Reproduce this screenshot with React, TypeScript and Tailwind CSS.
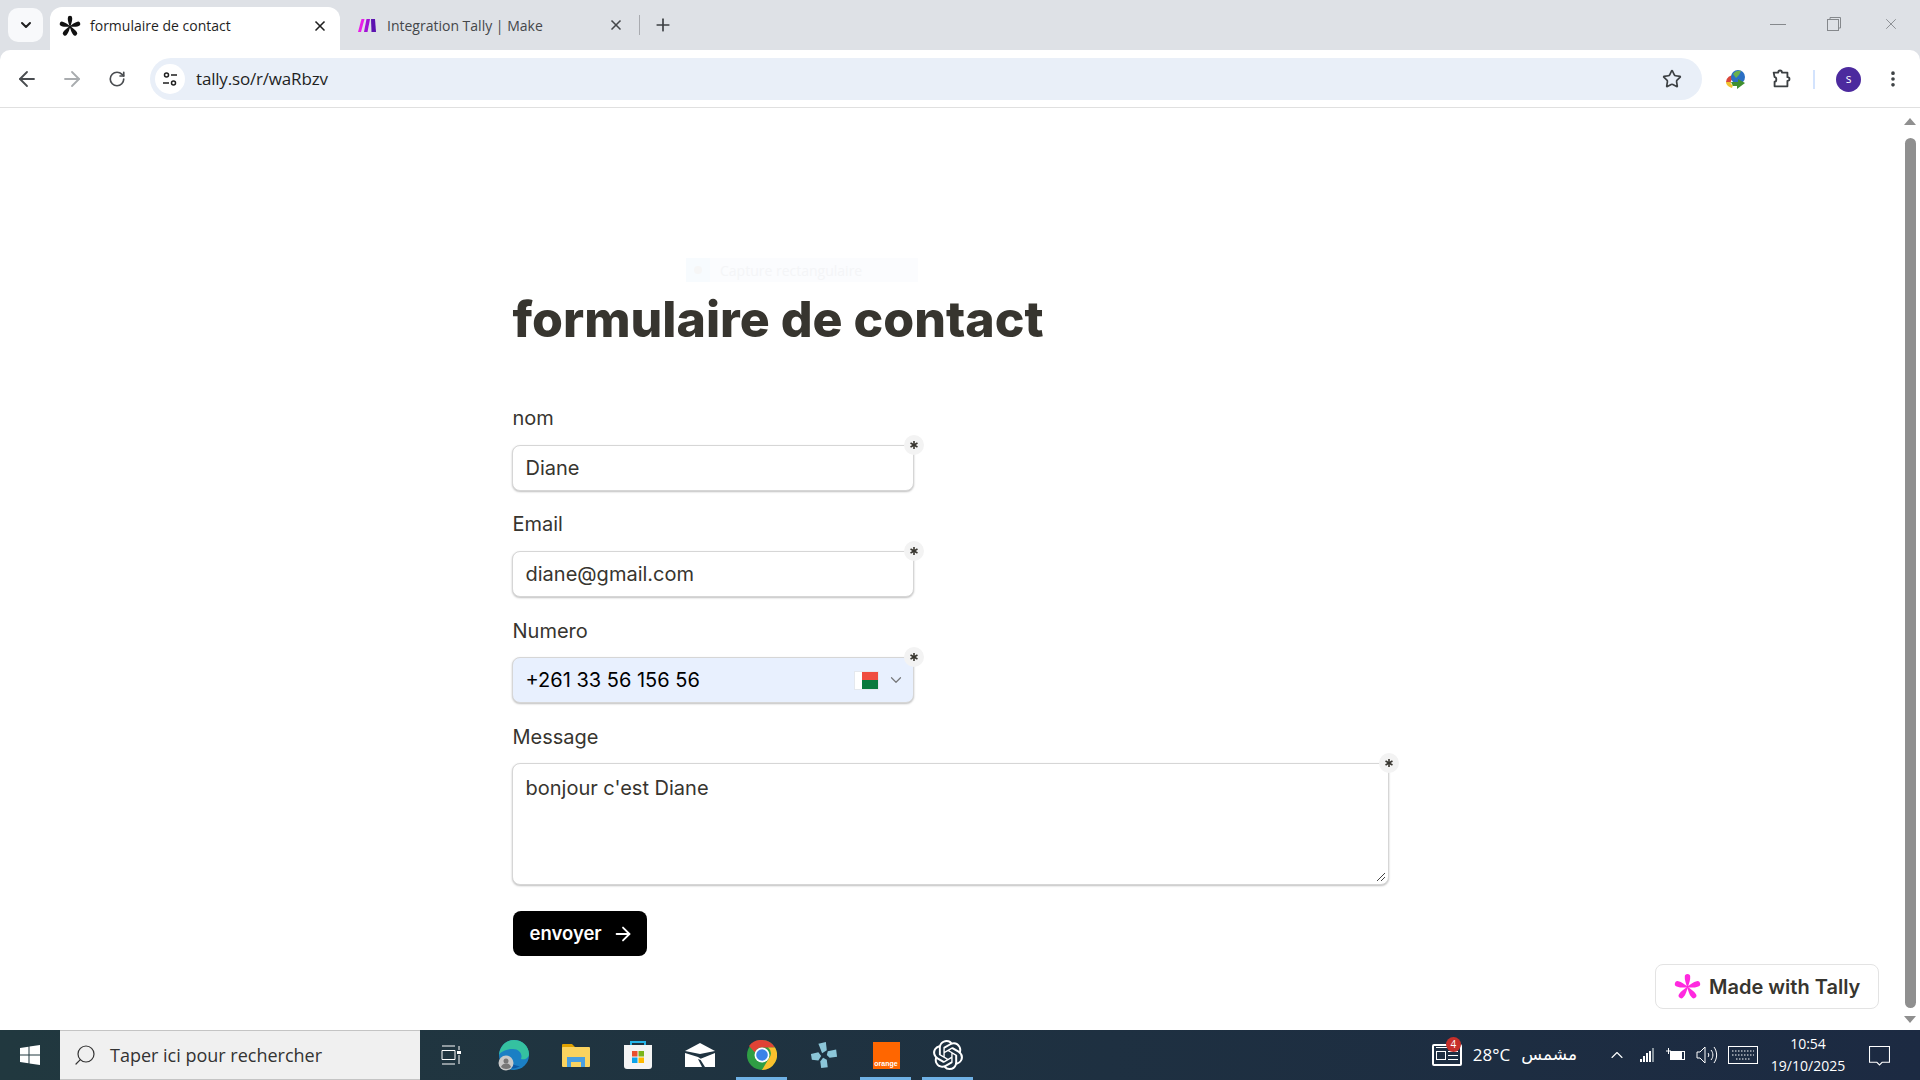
import { ArrowLeft, ArrowRight, ChevronDown, ChevronUp, MoreVertical, Plus, RotateCw, Search, Star, X } from 'lucide-react';
import { SiOpenai } from 'react-icons/si';

const uiFont = 'font-["Open_Sans","Noto_Sans","DejaVu_Sans",sans-serif]';

const TallyMark = ({ className, fill }: { className: string; fill: string }) => (
  <svg viewBox="0 0 24 24" className={className} fill={fill}>
    {[0, 72, 144, 216, 288].map((angle) => (
      <path
        key={angle}
        d="M12 13.500C10.600 9.500 9.300 6 9.600 3.200a2.400 2.400 0 0 1 4.800 0C14.700 6 13.400 9.500 12 13.500z"
        transform={`rotate(${angle} 12 12.500)`}
      />
    ))}
  </svg>
);

const MakeLogo = () => (
  <svg viewBox="0 0 18 13" className="w-[18px] h-[13px]">
    <path d="M3.500 0h3L3 13H0z" fill="#e91ee8" />
    <path d="M8.500 0h3.500L9.500 13H6z" fill="#a213d6" />
    <path d="M13 0h4l1 13h-4.500z" fill="#5c12b0" />
  </svg>
);

const RequiredMark = () => (
  <div className="absolute right-[-11px] top-[-11px] w-5 h-5 rounded-full bg-[#f3f3f3] flex items-center justify-center">
    <svg viewBox="0 0 10 10" className="w-2 h-2 fill-[#37352f]">
      {[0, 60, 120].map((angle) => (
        <rect key={angle} x="4" y="0" width="2" height="10" transform={`rotate(${angle} 5 5)`} />
      ))}
    </svg>
  </div>
);

const TabStrip = () => (
  <div className={`h-[50px] shrink-0 bg-[#dee1e6] flex items-start pl-2 ${uiFont}`}>
    <div className="w-[35px] h-[34px] mt-2 rounded-[10px] bg-[#f8f9fb] flex items-center justify-center">
      <ChevronDown className="w-4 h-4 text-[#1f1f1f]" strokeWidth={3} />
    </div>
    <div className="ml-[7px] mt-[7px] w-[290px] h-[43px] rounded-t-[12px] bg-white flex items-center pl-[9px] pb-[6px]">
      <TallyMark className="w-[22px] h-[22px] shrink-0" fill="#111111" />
      <span className="ml-[9px] text-[14px] text-[#1f1f1f]">formulaire de contact</span>
      <X className="ml-auto mr-[12px] w-4 h-4 text-[#1f1f1f]" strokeWidth={2.5} />
    </div>
    <div className="ml-[18px] h-[50px] w-[315px] flex items-center">
      <MakeLogo />
      <span className="ml-[11px] text-[14px] text-[#45474a]">Integration Tally | Make</span>
      <X className="ml-auto w-4 h-4 text-[#45474a]" strokeWidth={2.5} />
      <div className="ml-[15px] w-px h-5 bg-[#a9abb0]" />
      <Plus className="ml-[13px] w-[20px] h-[20px] text-[#3c3f43]" strokeWidth={2} />
    </div>
    <div className="ml-auto h-[48px] flex items-center text-[#85888c]">
      <div className="w-[16px] h-px bg-current mr-[41px]" />
      <svg viewBox="0 0 14 14" className="w-[14px] h-[14px] mr-[41px] fill-none stroke-current">
        <rect x="0.5" y="2.5" width="11" height="11" />
        <path d="M3 2.5V.5h10.500V11h-2" />
      </svg>
      <X className="w-[18px] h-[18px] mr-[20px]" strokeWidth={1.2} />
    </div>
  </div>
);

const IdmIcon = () => (
  <svg viewBox="0 0 22 20" className="w-[22px] h-[20px]">
    <path d="M1 13a8 7 0 0 1 9-7l-1 4a4 3 0 0 0-3 4z" fill="#d9463a" />
    <path d="M1 13c0 3 3 5 6 6l1-3c-2-.5-3-1.500-2-3z" fill="#f0c330" />
    <circle cx="13" cy="8" r="7" fill="#2a6fc4" />
    <path d="M8 5c2-3 5-4 8-3l-2 4-3 3z" fill="#6ab04c" />
    <path d="M6 13h7v-3l7 4-8 6v-3H8z" fill="#3f8f2f" />
  </svg>
);

const PuzzleIcon = () => (
  <svg viewBox="0 0 24 24" className="w-[22px] h-[22px] fill-none stroke-[#3c4043] stroke-[2]" strokeLinejoin="round">
    <path d="M4 5h5c0-3 4-3 4 0h6v5c3 0 3 4 0 4v6H5v-5c2.500 0 2.500-5 0-5z" />
  </svg>
);

const SiteIcon = () => (
  <svg viewBox="0 0 16 16" className="w-4 h-4 fill-none stroke-[#1f1f1f] stroke-[1.500]">
    <circle cx="4.500" cy="4" r="2" />
    <path d="M9 4h6M1 12h6" />
    <circle cx="11.500" cy="12" r="2" />
  </svg>
);

const Toolbar = () => (
  <div className={`h-[58px] shrink-0 bg-[#dee1e6] ${uiFont}`}>
    <div className="h-[57px] pt-px bg-white rounded-t-[10px] flex items-center">
      <ArrowLeft className="ml-[15px] w-6 h-6 text-[#494c50]" strokeWidth={1.8} />
      <ArrowRight className="ml-[21px] w-6 h-6 text-[#a9acaf]" strokeWidth={1.8} />
      <RotateCw className="ml-[24px] w-[18px] h-[18px] text-[#494c50]" strokeWidth={2.2} />
      <div className="ml-[24px] h-[42px] w-[1552px] rounded-full bg-[#e9eff8] flex items-center pl-[5px]">
        <div className="w-[30px] h-[30px] rounded-full bg-white flex items-center justify-center">
          <SiteIcon />
        </div>
        <span className="ml-[11px] text-[17px] text-[#1f1f1f] tracking-[-0.18px]">tally.so/r/waRbzv</span>
        <Star className="ml-auto mr-[20px] w-5 h-5 text-[#3c4043]" strokeWidth={2} />
      </div>
      <div className="ml-[23px]"><IdmIcon /></div>
      <div className="ml-[23px]"><PuzzleIcon /></div>
      <div className="ml-[21px] w-[2px] h-[19px] bg-[#d3e3fd]" />
      <div className="ml-[21px] w-[25px] h-[25px] rounded-full bg-[#4c2a9e] text-white text-[12px] flex items-center justify-center">s</div>
      <MoreVertical className="ml-[22px] w-5 h-5 text-[#3c4043]" strokeWidth={2.4} />
    </div>
    <div className="h-px bg-[#e0e0e0]" />
  </div>
);

const Field = ({ label, value }: { label: string; value: string }) => (
  <div className="w-[402px]">
    <div className="pl-px text-[20px] leading-[25px] text-[#37352f]">{label}</div>
    <div className="relative mt-[14px] h-[46px] rounded-[8px] border border-[#d6d6d6] shadow-[0_1px_2px_rgba(0,0,0,0.25)] bg-white flex items-center px-[13px] text-[20px] text-[#37352f]">
      {value}
      <RequiredMark />
    </div>
  </div>
);

const PhoneField = () => (
  <div className="w-[402px]">
    <div className="pl-px pt-px text-[20px] leading-[25px] text-[#37352f] box-content">Numero</div>
    <div className="relative mt-[13px] h-[46px] rounded-[8px] border border-[#d6d6d6] shadow-[0_1px_2px_rgba(0,0,0,0.25)] bg-[#e8f0fe] flex items-center pl-[13px] pr-[12px] text-[20px] text-black">
      +261 33 56 156 56
      <div className="ml-auto w-[25px] h-[19px] flex bg-white border border-[#e4e8ee]">
        <div className="w-1/3 bg-white" />
        <div className="flex-1 flex flex-col">
          <div className="flex-1 bg-[#f04d3f]" />
          <div className="flex-1 bg-[#0a7a3c]" />
        </div>
      </div>
      <ChevronDown className="ml-[8px] mr-[-4px] w-[18px] h-[18px] text-[#77787a]" strokeWidth={1.6} />
      <RequiredMark />
    </div>
  </div>
);

const MessageField = () => (
  <div className="w-[877px] mt-[21px]">
    <div className="pl-px pt-px text-[20px] leading-[25px] text-[#37352f] box-content">Message</div>
    <div className="relative mt-[13px] h-[122px] rounded-[8px] border border-[#d6d6d6] shadow-[0_1px_2px_rgba(0,0,0,0.25)] bg-white px-[13px] pt-[9px] text-[20px] leading-[30px] text-[#37352f]">
      bonjour c'est Diane
      <RequiredMark />
      <svg viewBox="0 0 10 10" className="absolute right-[2px] bottom-[2px] w-[10px] h-[10px] stroke-[#444] fill-none">
        <path d="M1 9l8-8M5 9l4-4" />
      </svg>
    </div>
  </div>
);

const ContactForm = () => (
  <main className="flex-1 relative overflow-hidden font-['Inter',sans-serif]">
    {/* leftover of the screen capture tool, almost invisible */}
    <div className={`absolute left-[686px] top-[150px] w-[232px] h-[24px] bg-[#fbfcfe] flex items-center text-[14px] text-[#f4f5f7] ${uiFont}`}>
      <div className="w-6 h-6 bg-[#f7fbfe] flex items-center justify-center">
        <div className="w-2 h-2 rounded-full bg-[#f6f6f6]" />
      </div>
      <span className="ml-[10px]">Capture rectangulaire</span>
    </div>

    <div className="mx-auto w-[877px] pt-[180px]">
      <h1 className="text-[50px] leading-[62px] font-extrabold text-[#37352f] pl-px">formulaire de contact</h1>
      <div className="mt-[56px] flex flex-col gap-[21px]">
        <Field label="nom" value="Diane" />
        <Field label="Email" value="diane@gmail.com" />
        <PhoneField />
      </div>
      <MessageField />
      <button className="mt-[26px] ml-px w-[134px] h-[45px] rounded-[8px] bg-black text-white text-[18.5px] font-semibold flex items-center pl-[17px] gap-[10px]">
        envoyer
        <ArrowRight className="w-[22px] h-[22px]" strokeWidth={2} />
      </button>
    </div>

    <div className="absolute right-[21px] bottom-[21px] w-[224px] h-[45px] rounded-[8px] border border-[#e3e3e3] bg-white flex items-center pl-[18px] gap-[8px] text-[20px] font-semibold text-[#37352f]">
      <TallyMark className="w-[27px] h-[27px]" fill="#ff29df" />
      Made with Tally
    </div>
  </main>
);

const Scrollbar = () => (
  <div className="w-5 shrink-0 bg-white flex flex-col items-center">
    <div className="mt-[10px] w-0 h-0 border-x-[6px] border-x-transparent border-b-[7px] border-b-[#8f8f8f]" />
    <div className="mt-[13px] w-[11px] h-[870px] rounded-full bg-[#8f8f8f]" />
    <div className="mt-[8px] w-0 h-0 border-x-[6px] border-x-transparent border-t-[7px] border-t-[#8f8f8f]" />
  </div>
);

const EdgeIcon = () => (
  <svg viewBox="0 0 32 32" className="w-[32px] h-[32px]">
    <circle cx="16" cy="16" r="15" fill="#1b7fc4" />
    <path d="M1 16C2 6 9 1 16 1c8 0 15 6 15 14 0 4-4 6-8 5 2-5-2-10-8-10C9 10 3 12 1 16z" fill="#35c1a0" />
    <path d="M12 20c0 5 5 7 10 7-4 3-9 3-12 1-2-3-1-7 2-8z" fill="#0c5aa6" />
    <circle cx="8" cy="24" r="7.500" fill="#c9c9c9" />
    <circle cx="8" cy="22" r="2.500" fill="#777" />
    <path d="M3 28c1-3 3-3.500 5-3.500s4 .5 5 3.500a7 7 0 0 1-10 0z" fill="#777" />
  </svg>
);

const ExplorerIcon = () => (
  <svg viewBox="0 0 28 24" className="w-[28px] h-[24px]">
    <path d="M0 2a1 1 0 0 1 1-1h9l3 3v6H0z" fill="#e0a100" />
    <rect y="4" width="28" height="20" rx="1" fill="#fbd35f" />
    <path d="M5 24V14h18v10h-4v-5h-10v5z" fill="#4a9fe0" />
  </svg>
);

const StoreIcon = () => (
  <svg viewBox="0 0 30 30" className="w-[30px] h-[30px]">
    <path d="M8 5V2h14v3" fill="none" stroke="#26b4e8" strokeWidth="2" />
    <path d="M1 5h28v21a3 3 0 0 1-3 3H4a3 3 0 0 1-3-3z" fill="#f4f4f4" />
    <rect x="9" y="11" width="5.500" height="5.500" fill="#e8502e" />
    <rect x="15.500" y="11" width="5.500" height="5.500" fill="#7ab51d" />
    <rect x="9" y="17.500" width="5.500" height="5.500" fill="#0ba4ea" />
    <rect x="15.500" y="17.500" width="5.500" height="5.500" fill="#fdb900" />
  </svg>
);

const MailIcon = () => (
  <svg viewBox="0 0 30 24" className="w-[30px] h-[24px]">
    <path d="M0 8L15 0l15 8-15 3z" fill="#fff" />
    <path d="M0 10l13 4 8 5-8-3 4 8H0zM30 10v14H20l-5-8z" fill="#fff" />
  </svg>
);

const ChromeIcon = () => (
  <svg viewBox="0 0 30 30" className="w-[30px] h-[30px]">
    <circle cx="15" cy="15" r="15" fill="#2f9e44" />
    <path d="M15 0a15 15 0 0 1 13 7.500H15a7.500 7.500 0 0 0-7 5L2 6A15 15 0 0 1 15 0z" fill="#e04335" />
    <path d="M28 7.500A15 15 0 0 1 15 30l6.500-11a7.500 7.500 0 0 0-.5-11.500z" fill="#fbc02d" />
    <circle cx="15" cy="15" r="7.500" fill="#fff" />
    <circle cx="15" cy="15" r="5.800" fill="#3b82e8" />
  </svg>
);

const PpssppIcon = () => (
  <svg viewBox="0 0 30 30" className="w-[28px] h-[28px] fill-[#8cc6d8]">
    <path d="M9 3l8-2 1 9-5 3z" />
    <path d="M19 11l9-2 1 8-8 1-3-3z" />
    <path d="M1 14l8-2 3 4-3 5-7-1z" />
    <path d="M14 18l4 2 1 8-7 1-1-7z" />
  </svg>
);

const OrangeIcon = () => (
  <div className="w-[27px] h-[27px] bg-[#ff6600] flex items-end justify-center text-[7px] font-bold leading-[11px] text-white font-['Liberation_Sans',sans-serif]">orange</div>
);

const TrayIcons = () => (
  <div className="flex items-center text-white">
    <ChevronUp className="ml-[30px] w-[20px] h-[20px]" strokeWidth={1.3} />
    <svg viewBox="0 0 14 14" className="ml-[13px] w-[14px] h-[14px] fill-white">
      <rect x="0" y="11" width="2" height="3" />
      <rect x="3" y="8" width="2" height="6" />
      <rect x="6" y="5" width="2" height="9" />
      <rect x="9" y="3" width="2" height="11" />
      <rect x="12" y="0" width="2" height="14" fill="#8a96a0" />
    </svg>
    <svg viewBox="0 0 20 14" className="ml-[12px] w-[20px] h-[14px] fill-none stroke-white">
      <rect x="4.500" y="3.500" width="14" height="8" />
      <rect x="5" y="4" width="11" height="7" fill="#fff" stroke="none" />
      <path d="M0 3h5M2.500 0v6" />
    </svg>
    <svg viewBox="0 0 22 18" className="ml-[10px] w-[22px] h-[18px] fill-none stroke-white">
      <path d="M1 6h3l5-5v16l-5-5H1zM12 7c1 1 1 3 0 4M15 4c2.500 3 2.500 7 0 10M18 1c3.500 5 3.500 11 0 16" />
    </svg>
    <svg viewBox="0 0 30 18" className="ml-[10px] w-[30px] h-[18px] fill-none stroke-white">
      <rect x="0.500" y="0.500" width="29" height="17" />
      <path d="M4 5h22M4 9h22M8 13h14" strokeDasharray="1.500 1.500" />
    </svg>
  </div>
);

const TaskItem = ({ children, active = false }: { children: React.ReactNode; active?: boolean }) => (
  <div className="relative w-[62px] flex items-center justify-center">
    {children}
    {active && <div className="absolute left-[5px] right-[6px] bottom-0 h-[3px] bg-[#6fb1e5]" />}
  </div>
);

const NewsIcon = () => (
  <div className="relative w-[30px] h-[22px] border-2 border-white rounded-[2px]">
    <div className="absolute left-[2px] right-[2px] top-[1px] h-px bg-white" />
    <div className="absolute left-[2px] top-[5px] w-[10px] h-[9px] border border-white" />
    <div className="absolute right-[2px] top-[5px] w-[10px] h-[9px] border-y border-white" />
    <div className="absolute right-[2px] top-[9px] w-[10px] h-px bg-white" />
    <div className="absolute -right-[1px] -top-[9px] w-[15px] h-[15px] rounded-full bg-[#c62f2a] text-[10px] leading-[15px] text-center">4</div>
  </div>
);

const Taskbar = () => (
  <footer className={`h-[50px] shrink-0 flex items-stretch bg-gradient-to-r from-[#21383f] to-[#1c2a42] text-white ${uiFont}`}>
    <div className="w-[60px] flex items-center justify-center">
      <svg viewBox="0 0 20 20" className="w-[20px] h-[20px] fill-white">
        <path d="M0 3l8.500-1.200v7.700H0zM9.500 1.600L20 0v9.500H9.500zM0 10.500h8.500v7.700L0 17zM9.500 10.500H20V20L9.500 18.400z" />
      </svg>
    </div>
    <div className="w-[360px] bg-[#f0f0f0] border-y border-[#c4c4c4] flex items-center pl-[13px] text-[#333] text-[18px]">
      <Search className="w-6 h-6 -scale-x-100" strokeWidth={1.2} />
      <span className="ml-[13px]">Taper ici pour rechercher</span>
    </div>
    <div className="w-[63px] pr-[2px] flex items-center justify-center">
      <svg viewBox="0 0 20 20" className="w-5 h-5 fill-none stroke-white">
        <path d="M1 1h13M1 19h13M1 5.500h13v9H1zM18 1v4M18 10v9" />
        <rect x="16.500" y="6.500" width="3" height="2" fill="#fff" />
      </svg>
    </div>
    <TaskItem><EdgeIcon /></TaskItem>
    <TaskItem><ExplorerIcon /></TaskItem>
    <TaskItem><StoreIcon /></TaskItem>
    <TaskItem><MailIcon /></TaskItem>
    <TaskItem active><ChromeIcon /></TaskItem>
    <TaskItem><PpssppIcon /></TaskItem>
    <TaskItem active><OrangeIcon /></TaskItem>
    <TaskItem active><SiOpenai className="w-[30px] h-[30px]" /></TaskItem>

    <div className="ml-auto flex items-center">
      <NewsIcon />
      <span className="ml-[11px] text-[17px]">28°C</span>
      <span className="ml-[11px] text-[17px] font-['DejaVu_Sans',sans-serif]">مشمس</span>
      <TrayIcons />
      <div className="w-[100px] text-center text-[14px] leading-[22px]">
        <div>10:54</div>
        <div>19/10/2025</div>
      </div>
      <svg viewBox="0 0 20 20" className="ml-[11px] mr-[30px] w-[21px] h-[21px] fill-none stroke-white">
        <path d="M.5 1.500h19v15h-7l-2.500 2.500-2.500-2.500h-7z" />
      </svg>
    </div>
  </footer>
);

export default function App() {
  return (
    <div className="w-[1920px] h-[1080px] flex flex-col overflow-hidden bg-white">
      <TabStrip />
      <Toolbar />
      <div className="flex-1 min-h-0 flex">
        <ContactForm />
        <Scrollbar />
      </div>
      <Taskbar />
    </div>
  );
}
